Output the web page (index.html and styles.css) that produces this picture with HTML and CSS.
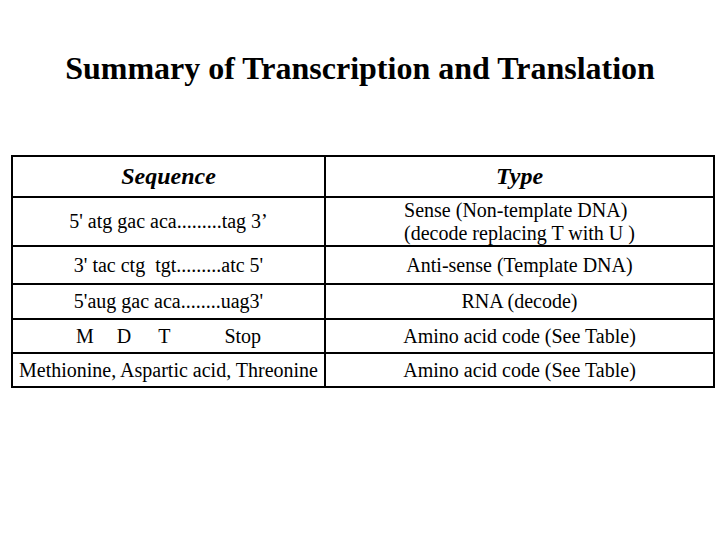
FILE: index.html
```html
<!DOCTYPE html>
<html>
<head>
<meta charset="utf-8">
<link rel="stylesheet" href="styles.css">
</head>
<body>
<h1 class="title">Summary of Transcription and Translation</h1>
<table class="summary">
  <colgroup><col class="c1"><col class="c2"></colgroup>
  <tr class="head"><th>Sequence</th><th>Type</th></tr>
  <tr class="r1"><td>5' atg gac aca.........tag 3’</td><td><span class="block">Sense (Non-template DNA)<br>(decode replacing T with U )</span></td></tr>
  <tr class="r2"><td class="pre">3' tac ctg  tgt.........atc 5'</td><td>Anti-sense (Template DNA)</td></tr>
  <tr class="r3"><td>5'aug gac aca........uag3'</td><td>RNA (decode)</td></tr>
  <tr class="r4"><td><span>M</span><span class="g1">D</span><span class="g2">T</span><span class="g3">Stop</span></td><td>Amino acid code (See Table)</td></tr>
  <tr class="r5"><td>Methionine, Aspartic acid, Threonine</td><td>Amino acid code (See Table)</td></tr>
</table>
</body>
</html>
```
FILE: styles.css
```css
html, body {
  margin: 0;
  padding: 0;
  background: #fff;
}
body {
  width: 720px;
  height: 540px;
  font-family: "Liberation Serif", "Times New Roman", serif;
  color: #000;
}
.title {
  margin: 0;
  padding-top: 48px;
  height: 40px;
  font-size: 32px;
  font-weight: bold;
  text-align: center;
  line-height: 40px;
}
.summary {
  margin: 67px 0 0 11px;
  width: 704px;
  border-collapse: collapse;
  table-layout: fixed;
  border: 2px solid #000;
}
.c1 { width: 313px; }
.summary th, .summary td {
  border: 2px solid #000;
  padding: 0;
  text-align: center;
  vertical-align: middle;
  font-size: 20px;
  line-height: 23px;
  white-space: nowrap;
}
.summary th {
  font-size: 24px;
  font-style: italic;
  font-weight: bold;
}
.summary td.pre { white-space: pre; }
.g1 { margin-left: 23px; }
.g2 { margin-left: 27px; }
.g3 { margin-left: 54px; }
.block {
  display: inline-block;
  text-align: left;
}
.head { height: 41px; }
.r1 { height: 49px; }
.r2 { height: 38px; }
.r3 { height: 35px; }
.r4 { height: 34px; }
.r5 { height: 34px; }
```
